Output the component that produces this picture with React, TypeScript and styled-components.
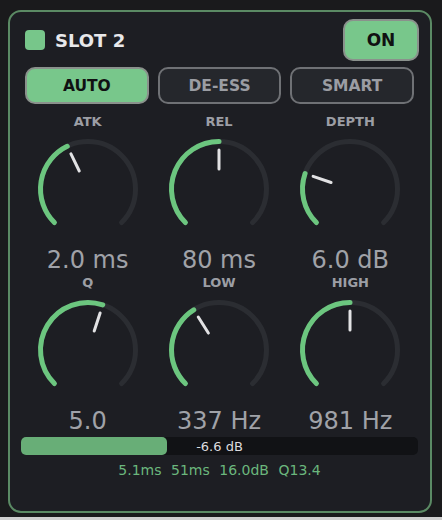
import React from "react"
import styled, { createGlobalStyle } from "styled-components"

const GlobalStyle = createGlobalStyle`
  html {
    background: #cfcfcf;
  }
  body {
    margin: 0;
    font-family: "DejaVu Sans", "Liberation Sans", sans-serif;
  }
`

const Page = styled.div`
  height: 517px;
  box-sizing: border-box;
  padding: 10px 10px 0 8px;
  background: #1a1a1c;
`

const Panel = styled.div`
  height: 503px;
  box-sizing: border-box;
  border: 2px solid #5b8a64;
  border-radius: 13px;
  background: #1d1e23;
  padding: 7px 11px 0 11px;
  display: flex;
  flex-direction: column;
`

const Header = styled.div`
  display: flex;
  align-items: center;
  justify-content: space-between;
  height: 42px;
  padding-left: 4px;
`

const Title = styled.div`
  display: flex;
  align-items: center;
  gap: 10px;
  color: #e8e8ea;
  font-size: 18px;
  font-weight: bold;
`

const Led = styled.div`
  width: 20px;
  height: 20px;
  border-radius: 4px;
  background: #77c68a;
`

const Toggle = styled.button<{ $active?: boolean }>`
  box-sizing: border-box;
  border: 2px solid ${(p) => (p.$active ? "#8a918c" : "#6f7175")};
  border-radius: 10px;
  background: ${(p) => (p.$active ? "#78c78b" : "#25272c")};
  color: ${(p) => (p.$active ? "#101112" : "#9b9da3")};
  font-family: inherit;
  font-weight: bold;
  padding: 0;
  cursor: pointer;
`

const OnButton = styled(Toggle)`
  width: 76px;
  height: 42px;
  font-size: 17px;
`

const Modes = styled.div`
  display: grid;
  grid-template-columns: repeat(3, 1fr);
  gap: 9px;
  margin-top: 6px;
  padding: 0 5px 0 4px;
`

const ModeButton = styled(Toggle)`
  height: 37px;
  font-size: 15.5px;
`

const KnobGrid = styled.div`
  display: grid;
  grid-template-columns: repeat(3, 1fr);
  row-gap: 1px;
  margin-top: 10px;
  padding: 0 3px 0 1px;
`

const KnobCell = styled.div`
  display: flex;
  flex-direction: column;
  align-items: center;
`

const KnobLabel = styled.div`
  height: 16px;
  line-height: 16px;
  font-size: 13px;
  font-weight: bold;
  color: #9c9ea5;
`

const KnobDial = styled.svg`
  display: block;
  margin-top: 4px;
`

const KnobValue = styled.div`
  margin-top: 2px;
  height: 28px;
  line-height: 28px;
  font-size: 24px;
  color: #a0a2a8;
`

const Meter = styled.div`
  position: relative;
  height: 18px;
  margin: 2px 1px 0 0;
  border-radius: 5px;
  background: #111215;
`

const MeterFill = styled.div`
  height: 100%;
  border-radius: 5px;
  background: #68ae77;
`

const MeterText = styled.div`
  position: absolute;
  inset: 0;
  display: flex;
  align-items: center;
  justify-content: center;
  font-size: 13px;
  color: #dcdcdf;
`

const Stats = styled.div`
  display: flex;
  justify-content: center;
  gap: 9.5px;
  margin-top: 7px;
  padding-right: 1px;
  font-size: 14px;
  line-height: 17px;
  color: #6bb77d;
`

const SIZE = 110
const C = SIZE / 2
const R = 47.5

const point = (deg: number) => {
  const a = (deg * Math.PI) / 180
  return [C + R * Math.sin(a), C - R * Math.cos(a)]
}

const arc = (from: number, to: number) => {
  const [x1, y1] = point(from)
  const [x2, y2] = point(to)
  const large = to - from > 180 ? 1 : 0
  return `M ${x1} ${y1} A ${R} ${R} 0 ${large} 1 ${x2} ${y2}`
}

const Knob = ({ label, value, display }: { label: string; value: number; display: string }) => {
  const angle = -135 + 270 * value
  const a = (angle * Math.PI) / 180
  return (
    <KnobCell>
      <KnobLabel>{label}</KnobLabel>
      <KnobDial width={SIZE} height={SIZE} viewBox={`0 0 ${SIZE} ${SIZE}`}>
        <path d={arc(-135, 135)} fill="none" stroke="#2b2d32" strokeWidth={5} strokeLinecap="round" />
        <path d={arc(-135, angle)} fill="none" stroke="#6cc67f" strokeWidth={5} strokeLinecap="round" />
        <line
          x1={C + 20 * Math.sin(a)}
          y1={C - 20 * Math.cos(a)}
          x2={C + 39 * Math.sin(a)}
          y2={C - 39 * Math.cos(a)}
          stroke="#e2e2e4"
          strokeWidth={3}
          strokeLinecap="round"
        />
      </KnobDial>
      <KnobValue>{display}</KnobValue>
    </KnobCell>
  )
}

const knobs = [
  { label: "ATK", value: 0.404, display: "2.0 ms" },
  { label: "REL", value: 0.5, display: "80 ms" },
  { label: "DEPTH", value: 0.237, display: "6.0 dB" },
  { label: "Q", value: 0.567, display: "5.0" },
  { label: "LOW", value: 0.381, display: "337 Hz" },
  { label: "HIGH", value: 0.5, display: "981 Hz" },
]

const App: React.FC = () => {
  return (
    <Page>
      <GlobalStyle />
      <Panel>
        <Header>
          <Title>
            <Led />
            SLOT 2
          </Title>
          <OnButton $active>ON</OnButton>
        </Header>
        <Modes>
          <ModeButton $active>AUTO</ModeButton>
          <ModeButton>DE-ESS</ModeButton>
          <ModeButton>SMART</ModeButton>
        </Modes>
        <KnobGrid>
          {knobs.map((k) => (
            <Knob key={k.label} {...k} />
          ))}
        </KnobGrid>
        <Meter>
          <MeterFill style={{ width: "36.8%" }} />
          <MeterText>-6.6 dB</MeterText>
        </Meter>
        <Stats>
          <span>5.1ms</span>
          <span>51ms</span>
          <span>16.0dB</span>
          <span>Q13.4</span>
        </Stats>
      </Panel>
    </Page>
  )
}

export default App
